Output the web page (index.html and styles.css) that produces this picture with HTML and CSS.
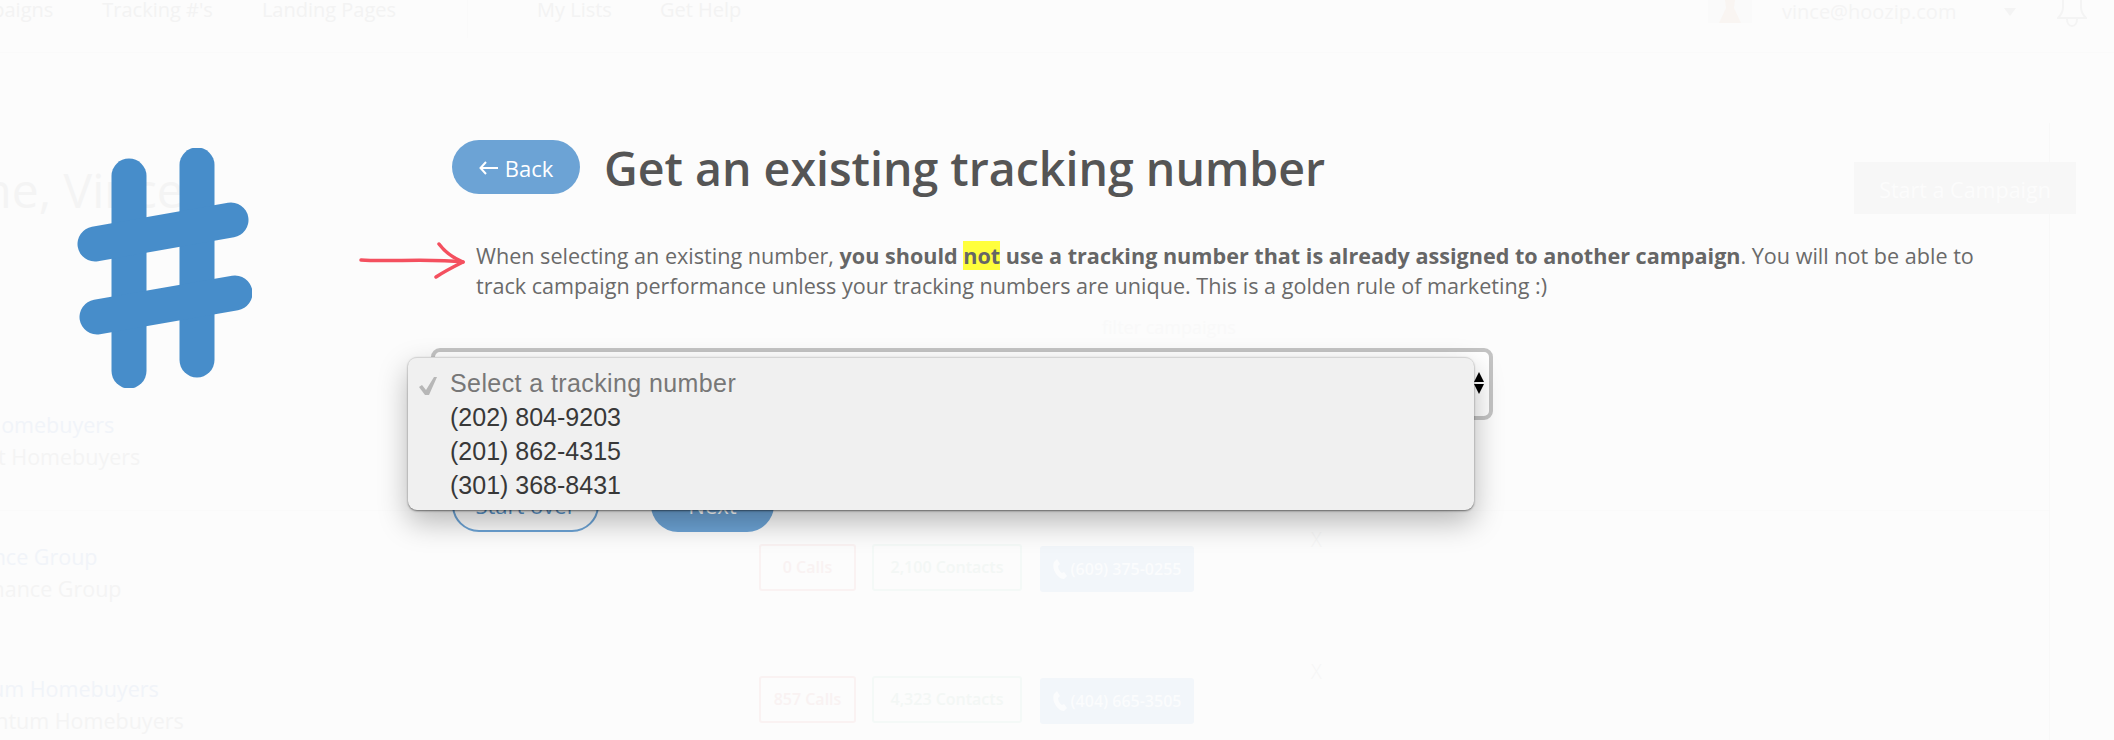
FILE: index.html
```html
<!DOCTYPE html>
<html lang="en">
<head>
    <meta charset="UTF-8" />
    <meta name="viewport" content="width=device-width, initial-scale=1.0" />
    <title>Get an existing tracking number</title>
    <link rel="stylesheet" href="styles.css">
</head>
<body>
    <div class="page">
        <header class="topbar">
            <nav class="nav-left">
                <a>Campaigns</a>
                <a>Tracking #'s</a>
                <a>Landing Pages</a>
            </nav>
            <nav class="nav-mid">
                <a>My Lists</a>
                <a>Get Help</a>
            </nav>
            <div class="user">
                <svg class="avatar" width="44" height="23" viewBox="0 0 44 23">
                    <rect width="44" height="23" fill="#fafafa" />
                    <path fill="#f9f5f2" d="M17 0h10l-1 8 7 15H11l7-15z" />
                </svg>
                <div class="user-text">
                    <strong>Vince</strong>
                    <span>vince@hoozip.com</span>
                </div>
                <div class="caret"></div>
                <svg class="bell" width="30" height="42" viewBox="0 0 30 42" fill="none" stroke="#f4f4f4" stroke-width="2">
                    <path d="M15 1c-6 0-9 5-9 11v10c0 5-2 8-5 11h28c-3-3-5-6-5-11V12c0-6-3-11-9-11z" />
                    <path d="M10 34c0 4 2 7 5 7s5-3 5-7" />
                </svg>
            </div>
        </header>

        <main class="dashboard">
            <div class="dash-head">
                <h2>Welcome, Vince</h2>
                <a class="start-btn">Start a Campaign</a>
            </div>
            <div class="filter-label">filter campaigns</div>

            <section class="campaign">
                <div class="campaign-name">
                    <p class="name-link shift-a">Stonecrest Homebuyers</p>
                    <p class="name-sub shift-b">Stonecrest Homebuyers</p>
                </div>
            </section>
            <section class="campaign">
                <div class="campaign-name">
                    <p class="name-link shift-c">Finance Group</p>
                    <p class="name-sub shift-d">Finance Group</p>
                </div>
                <div class="stats">
                    <span class="stat calls">0 Calls</span>
                    <span class="stat contacts">2,100 Contacts</span>
                    <span class="phone">
                        <svg width="14" height="20" viewBox="0 0 14 20"><path fill="#fbfcfd" d="M1 3l3-3 3 5-2 2c0 3 2 6 4 7l2-1 3 4-3 3C5 20-2 10 1 3z" /></svg>
                        (609) 375-0255
                    </span>
                </div>
                <span class="remove">X</span>
            </section>
            <section class="campaign">
                <div class="campaign-name">
                    <p class="name-link shift-e">Momentum Homebuyers</p>
                    <p class="name-sub shift-f">Momentum Homebuyers</p>
                </div>
                <div class="stats">
                    <span class="stat calls">857 Calls</span>
                    <span class="stat contacts">4,323 Contacts</span>
                    <span class="phone">
                        <svg width="14" height="20" viewBox="0 0 14 20"><path fill="#fbfcfd" d="M1 3l3-3 3 5-2 2c0 3 2 6 4 7l2-1 3 4-3 3C5 20-2 10 1 3z" /></svg>
                        (404) 665-3505
                    </span>
                </div>
                <span class="remove">X</span>
            </section>
        </main>
    </div>

    <div class="wizard">
        <div class="wizard-icon">
            <svg width="175" height="240" viewBox="0 0 175 240" fill="none" stroke="#478dca" stroke-width="35" stroke-linecap="round">
                <path d="M52 28V223" />
                <path d="M120 17V212" />
                <path d="M18 96L154 72" />
                <path d="M20 169L158 145" />
            </svg>
        </div>
        <div class="wizard-body">
            <div class="wizard-head">
                <a class="back-btn">
                    <svg width="19" height="14" viewBox="0 0 19 14" fill="none" stroke="#fff" stroke-width="2"><path d="M19 7H2M7 1L1.5 7L7 13" /></svg>
                    Back
                </a>
                <h1>Get an existing tracking number</h1>
            </div>
            <div class="note">
                <svg class="note-arrow" width="108" height="38" viewBox="0 0 108 38" fill="none" stroke="#f4505f" stroke-width="3.5" stroke-linecap="round" stroke-linejoin="round">
                    <path d="M2 18C30 20 70 16 104 20" />
                    <path d="M80 2C86 10 94 16 104 20C96 24 86 29 77 35" />
                </svg>
                <p>When selecting an existing number, <b>you should <mark>not</mark> use a tracking number that is already assigned to another campaign</b>. You will not be able to track campaign performance unless your tracking numbers are unique. This is a golden rule of marketing :)</p>
            </div>
            <div class="select-box">
                <div class="stepper">
                    <i class="up"></i>
                    <i class="down"></i>
                </div>
                <ul class="select-menu">
                    <li class="selected">
                        <svg class="tick" width="18" height="18" viewBox="0 0 18 18"><path fill="#b7b7b7" d="M15 0h3L10 18H6L0 10l3-2 4 5z" /></svg>
                        Select a tracking number
                    </li>
                    <li>(202) 804-9203</li>
                    <li>(201) 862-4315</li>
                    <li>(301) 368-8431</li>
                </ul>
            </div>
            <div class="wizard-actions">
                <a class="btn-outline">Start over</a>
                <a class="btn-solid">Next</a>
            </div>
        </div>
    </div>
</body>
</html>
```

FILE: styles.css
```css
* {
    box-sizing: border-box;
}

html, body {
    height: 100%;
}

body {
    margin: 0;
    height: 740px;
    overflow: hidden;
    position: relative;
    background: #fcfcfc;
    font-family: "Open Sans", Arial, sans-serif;
    color: #555;
}

p, h1, h2, ul {
    margin: 0;
    padding: 0;
}

/* faded page behind the wizard */
.page {
    height: 740px;
    overflow: hidden;
}

.topbar {
    display: flex;
    height: 53px;
    border-bottom: 1px solid #fafafa;
    font-size: 20px;
    line-height: 20px;
    color: #f3f3f3;
}

.nav-left {
    display: flex;
    gap: 49px;
    width: 467px;
    margin-left: -50px;
    flex: none;
}

.nav-mid {
    display: flex;
    gap: 48px;
    height: 38px;
    padding-left: 69px;
    border-left: 1px solid #fafafa;
    margin-left: 50px;
}

.user {
    display: flex;
    margin-left: auto;
}

.avatar {
    flex: none;
}

.user-text {
    display: flex;
    flex-direction: column;
    width: 222px;
    margin: -25px 0 0 30px;
    line-height: 26px;
    color: #f4f4f4;
}

.user-text strong {
    line-height: 24px;
}

.caret {
    width: 0;
    height: 0;
    margin-top: 8px;
    border: 6px solid transparent;
    border-top: 8px solid #f4f4f4;
}

.bell {
    margin: -15px 27px 0 41px;
}

.dashboard {
    width: 2050px;
    height: 687px;
    margin-top: 70px;
    border-right: 1px solid #f8f8f8;
    color: #f3f3f3;
}

.dash-head {
    display: flex;
    justify-content: space-between;
    height: 100px;
}

.dash-head h2 {
    margin: 37px 0 0 -168px;
    font-size: 48px;
    font-weight: 400;
    line-height: 60px;
    color: #f4f4f4;
}

.start-btn {
    display: block;
    width: 222px;
    height: 52px;
    margin: 39px -27px 0 0;
    background: #f7f7f7;
    color: #fcfcfc;
    font-size: 21.5px;
    line-height: 55px;
    text-align: center;
}

.filter-label {
    margin: 90px 0 38px 1102px;
    height: 28px;
    color: #f9f9f9;
    font-size: 18px;
    line-height: 28px;
}

.campaign {
    display: flex;
    height: 132px;
    padding-top: 28px;
    border-bottom: 1px solid #fafafa;
    font-size: 21.5px;
}

.campaign:nth-of-type(n+2) {
    border-bottom: 0;
}

.campaign-name {
    width: 759px;
    flex: none;
}

.name-link {
    line-height: 36px;
    color: #f1f4f9;
    white-space: nowrap;
}

.name-sub {
    line-height: 30px;
    margin-top: -1px;
    color: #f4f4f4;
    white-space: nowrap;
}

/* the left column runs off the edge of the shot */
.shift-a { margin-left: -127px; }
.shift-b { margin-left: -101px; }
.shift-c { margin-left: -49px; }
.shift-d { margin-left: -25px; }
.shift-e { margin-left: -94px; }
.shift-f { margin-left: -69px; }

.stats {
    display: flex;
    gap: 16px;
    width: 559px;
    margin-top: 5px;
    flex: none;
    align-items: flex-start;
    font-size: 16px;
    font-weight: 600;
    line-height: 43px;
    text-align: center;
}

.stat {
    height: 47px;
    border: 2px solid #faf2f2;
    border-radius: 3px;
}

.calls {
    width: 97px;
    color: #f9f2f2;
}

.contacts {
    width: 150px;
    border-color: #f4f9f7;
    color: #f3f7f5;
}

.phone {
    display: flex;
    align-items: center;
    justify-content: center;
    gap: 4px;
    width: 154px;
    height: 46px;
    margin: 2px 0 0 2px;
    background: #f2f6fa;
    border-radius: 3px;
    color: #fbfcfd;
    white-space: nowrap;
}

.remove {
    margin: -13px 0 0 -7px;
    font-size: 20px;
    line-height: 28px;
    color: #f6f6f6;
    font-weight: 300;
}

/* wizard on top */
.wizard {
    position: absolute;
    inset: 0;
    display: flex;
}

.wizard-icon {
    width: 452px;
    flex: none;
    padding: 148px 0 0 77px;
}

.wizard-icon svg {
    display: block;
}

.wizard-body {
    width: 1540px;
    padding-top: 140px;
}

.wizard-head {
    display: flex;
    align-items: center;
    gap: 24px;
    height: 54px;
}

.back-btn {
    display: flex;
    align-items: center;
    justify-content: center;
    gap: 7px;
    width: 128px;
    height: 54px;
    padding-top: 1px;
    background: #6ca3d5;
    border-radius: 27px;
    color: #fff;
    font-size: 22px;
    line-height: 30px;
}

h1 {
    margin-top: 2px;
    font-size: 46.5px;
    font-weight: 600;
    line-height: 60px;
    color: #555;
    white-space: nowrap;
}

.note {
    position: relative;
    margin: 47px 0 0 24px;
    font-size: 21.58px;
    line-height: 30px;
    color: #6a6a6a;
}

.note b {
    font-weight: 700;
    color: #666;
}

.note mark {
    background: #ffff3c;
    color: inherit;
}

.note-arrow {
    position: absolute;
    left: -117px;
    top: 1px;
}

.select-box {
    position: relative;
    width: 1062px;
    height: 72px;
    margin: 47px 0 0 -21px;
    background: #fff;
    border: 4px solid #c4c4c4;
    border-radius: 9px;
}

.stepper {
    display: flex;
    flex-direction: column;
    align-items: flex-end;
    gap: 2px;
    padding: 20px 5px 0 0;
}

.stepper i {
    width: 0;
    height: 0;
    border-left: 5px solid transparent;
    border-right: 5px solid transparent;
}

.stepper .up {
    border-bottom: 10px solid #000;
}

.stepper .down {
    border-top: 10px solid #000;
}

.select-menu {
    position: absolute;
    left: -27px;
    top: 5px;
    width: 1066px;
    height: 153px;
    padding-top: 8px;
    list-style: none;
    background: #f0f0f0;
    border-top: 1px solid #d4d4d4;
    border-radius: 9px;
    box-shadow: 0 1px 2px rgba(0, 0, 0, 0.5), 0 12px 30px rgba(0, 0, 0, 0.28);
    font-family: "Liberation Sans", Arial, sans-serif;
    font-size: 25px;
    line-height: 34px;
    color: #383838;
}

.select-menu li {
    position: relative;
    padding-left: 42px;
}

.select-menu .selected {
    color: #777;
    letter-spacing: 0.4px;
}

.tick {
    position: absolute;
    left: 11px;
    top: 11px;
}

.wizard-actions {
    display: flex;
    gap: 52px;
    margin: 58px 0 0 0;
    font-size: 22px;
}

.btn-outline, .btn-solid {
    display: block;
    height: 54px;
    border-radius: 27px;
    line-height: 54px;
    text-align: center;
}

.btn-outline {
    width: 147px;
    border: 2px solid #6ca3d5;
    line-height: 50px;
    color: #5a93c6;
}

.btn-solid {
    width: 123px;
    background: #6ca3d5;
    color: #fff;
}
```
